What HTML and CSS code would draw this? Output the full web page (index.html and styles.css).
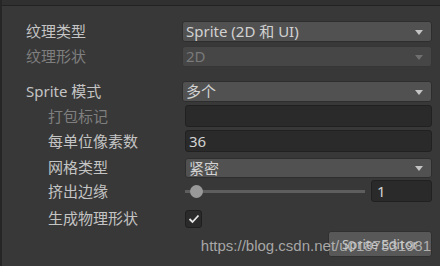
FILE: index.html
```html
<!DOCTYPE html>
<html lang="zh">
<head>
<meta charset="utf-8" />
<link rel="stylesheet" href="styles.css">
</head>
<body>
<div class="window">
  <div class="topbar"></div>
  <div class="panel">
    <div class="row r1">
      <span class="label">纹理类型</span>
      <div class="dropdown">Sprite (2D 和 UI)<i class="arrow"></i></div>
    </div>
    <div class="row r2">
      <span class="label dim">纹理形状</span>
      <div class="dropdown off">2D<i class="arrow"></i></div>
    </div>
    <div class="row r3">
      <span class="label">Sprite 模式</span>
      <div class="dropdown">多个<i class="arrow"></i></div>
    </div>
    <div class="row sub r4">
      <span class="label dim">打包标记</span>
      <div class="field"></div>
    </div>
    <div class="row sub r5">
      <span class="label">每单位像素数</span>
      <div class="field">36</div>
    </div>
    <div class="row sub r6">
      <span class="label">网格类型</span>
      <div class="dropdown">紧密<i class="arrow"></i></div>
    </div>
    <div class="row sub r7">
      <span class="label">挤出边缘</span>
      <div class="slider">
        <div class="track"><span class="knob"></span></div>
        <div class="field num">1</div>
      </div>
    </div>
    <div class="row sub r8">
      <span class="label">生成物理形状</span>
      <div class="check">
        <svg width="12" height="10" viewBox="0 0 12 10"><polyline points="1.5,5 4.5,8 10.5,1.5" fill="none" stroke="#e6e6e6" stroke-width="1.8"/></svg>
      </div>
    </div>
    <div class="actions">
      <button class="btn">Sprite Editor</button>
      <span class="watermark">https://blog.csdn.net/u0187331981</span>
    </div>
  </div>
</div>
</body>
</html>
```

FILE: styles.css
```css
html, body {margin: 0; padding: 0;}
body {background: #383838; font-family: "Noto Sans", "Noto Sans CJK SC", sans-serif; color: #c4c4c4;}

.window {width: 440px; height: 266px; overflow: hidden; border-left: 2px solid #262626; box-sizing: border-box;}
.topbar {height: 5px; background: #303030; border-bottom: 1px solid #222;}

.panel {padding: 15px 8px 0 24px; position: relative;}

.row {display: grid; grid-template-columns: 156px 1fr; align-items: center; height: 21px; font-size: 15px;}
.label {line-height: 21px; white-space: nowrap;}
.label.dim {color: #7f7f7f;}
.sub .label {padding-left: 22px;}
.sub > :last-child {margin-left: 3px;}

.r2 {margin-top: 4px;}
.r3 {margin-top: 14px;}
.r4 {margin-top: 3px; height: 22px;}
.r5 {margin-top: 3px; height: 22px;}
.r6 {margin-top: 5px; height: 20px;}
.r7 {margin-top: 3px; height: 22px;}
.r8 {margin-top: 6px; height: 18px;}

.dropdown {position: relative; height: 21px; box-sizing: border-box; background: #515151; border: 1px solid #2e2e2e; border-radius: 3px; padding-left: 3px; line-height: 19px; font-size: 15px; color: #d2d2d2;}
.dropdown.off {background: #464646; border-color: #363636; color: #7a7a7a;}
.arrow {position: absolute; right: 8px; top: 8px; width: 0; height: 0; border-left: 4px solid transparent; border-right: 4px solid transparent; border-top: 5px solid #c4c4c4;}
.off .arrow {border-top-color: #6f6f6f;}
.r6 .dropdown {height: 20px; line-height: 18px;}
.r6 .arrow {top: 7px;}

.field {height: 22px; box-sizing: border-box; background: #2a2a2a; border: 1px solid #212121; border-radius: 3px; padding-left: 3px; line-height: 20px; color: #d2d2d2; font-size: 15px;}

.slider {display: flex; align-items: center; gap: 6px;}
.track {position: relative; flex: 1; height: 3px; background: #5e5e5e;}
.knob {position: absolute; left: 5px; top: -5px; width: 13px; height: 13px; border-radius: 50%; background: #999;}
.field.num {width: 61px; flex: none; padding-left: 5px;}

.check {width: 17px; height: 18px; box-sizing: border-box; background: #2a2a2a; border: 1px solid #1f1f1f; border-radius: 3px; display: flex; align-items: center; justify-content: center;}

.actions {display: flex; justify-content: flex-end; margin-top: 5px; position: relative;}
.btn {width: 104px; height: 26px; background: #585858; border: 1px solid #303030; border-radius: 3px; color: #c8c8c8; font-family: "Noto Sans", sans-serif; font-size: 13px; padding: 0;}
.watermark {position: absolute; right: 1px; top: 6px; font-family: "Liberation Sans", Arial, sans-serif; font-size: 15px; color: rgba(205, 205, 205, 0.75); white-space: nowrap;}
```
